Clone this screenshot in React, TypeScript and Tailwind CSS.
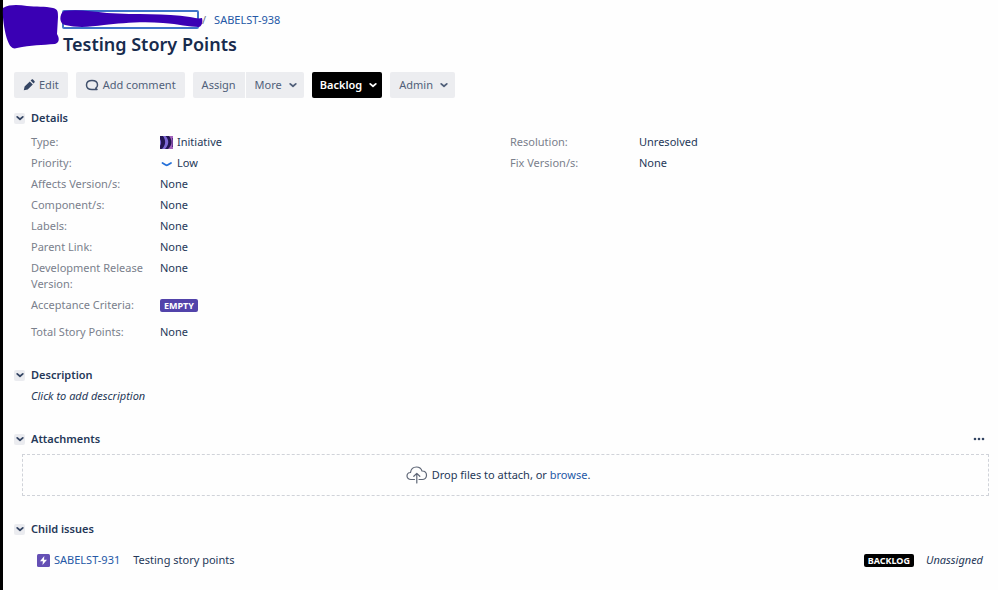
import type { ReactNode } from "react";

function Caret() {
  return (
    <svg viewBox="0 0 10 10" className="size-[10px] shrink-0" fill="none" stroke="currentColor" strokeWidth="1.8" strokeLinecap="round" strokeLinejoin="round" aria-hidden="true">
      <path d="M2.2 3.9 5 6.2l2.8-2.3" />
    </svg>
  );
}

function ToolButton({ children, className = "" }: { children: ReactNode; className?: string }) {
  return (
    <button type="button" className={`flex h-[26px] items-center bg-[#ecedf0] text-[#505f79] ${className}`}>
      {children}
    </button>
  );
}

function SectionHeading({ title, children }: { title: string; children?: ReactNode }) {
  return (
    <div className="flex h-4 items-center">
      <button type="button" aria-label={`Toggle ${title}`} className="mr-[6px] flex size-[11px] items-center justify-center rounded-xs bg-[#ebecf0] text-[#344563]">
        <Caret />
      </button>
      <h2 className="font-semibold">{title}</h2>
      {children}
    </div>
  );
}

function Field({ label, children }: { label: string; children: ReactNode }) {
  return (
    <div className="flex">
      <dt className="w-[129px] shrink-0 pr-3 text-[#7a808c]">{label}</dt>
      <dd className="flex h-4 items-center">{children}</dd>
    </div>
  );
}

function InitiativeIcon() {
  return (
    <svg viewBox="0 0 13 13" className="mr-1 size-[13px]" aria-hidden="true">
      <path fill="#a565bd" d="M0 0h13v13H0z" />
      <path fill="#241653" d="M0 0h9c3.500 4 3.500 9-1 13H0z" />
      <path fill="#7f6ad6" d="M0 3c1.500 2 1.500 5 0 7zM3 0h2.500c4 4 3.500 9-.5 13H2C6 9 6 4 3 0z" />
      <path fill="#4a2787" d="M12 2h1v9h-1c.7-3 .7-6 0-9z" />
    </svg>
  );
}

export default function App() {
  return (
    <main className="min-h-screen border-l-3 border-black bg-[#fefefe] pr-[9px] pb-5 font-['Noto_Sans','Open_Sans',sans-serif] text-[11px] leading-4 text-[#253858]">
      <header className="flex h-[57px] pt-[5px]">
        <svg viewBox="0 0 58 44" className="-ml-px h-[44px] w-[58px] shrink-0" aria-hidden="true">
          <path fill="#3a00b4" d="M1 3C8-1 17 0 25 1c9 1 18 0 26 2 5 1 5 4 5 9l-1 17c3 5 2 9-2 10-13 1-24 1-38 4-5 2-8-3-10-9C3 28 0 13 1 3z" />
        </svg>
        <div>
          <nav aria-label="Breadcrumb" className="ml-[2px] flex items-center pt-[5px] text-[#2458a6]">
            <a href="#project" aria-label="Project" className="relative block h-[19px] w-[137px] rounded-xs border-2 border-[#3f74c8]">
              <svg viewBox="0 0 144 18" className="absolute -top-[2px] -left-[4px] h-[18px] w-[144px] max-w-none" aria-hidden="true">
                <path fill="#3a00b4" d="M4 1c12-2 27 0 43 2 30 2 58 0 83 4 6 1 8 2 12 1 1 4 0 8-3 9-10 0-20-3-36-4-20-2-42 0-59 2-14 2-27 3-39 0C-1 14-1 4 4 1z" />
              </svg>
            </a>
            <span className="ml-[3px] text-[#6b778c]">/</span>
            <a href="#SABELST-938" className="ml-2">SABELST-938</a>
          </nav>
          <h1 className="ml-[3px] text-[18px] leading-[30px] font-semibold text-[#172b4d]">Testing Story Points</h1>
        </div>
      </header>

      <div className="mt-[15px] ml-[11px] flex gap-2" role="toolbar" aria-label="Issue actions">
        <ToolButton className="rounded-xs px-[9px]">
          <svg viewBox="0 0 12 12" className="mr-1 size-[12px]" fill="#344563" aria-hidden="true">
            <path d="m.8 11.300.8-3.800L6.800 2.400l3 3-5.100 5.100zM7.600 1.600l.9-.9c.5-.5 1.200-.5 1.700 0l1.200 1.200c.5.500.5 1.200 0 1.700l-.9.900z" />
          </svg>
          Edit
        </ToolButton>
        <ToolButton className="rounded-xs px-[9px]">
          <svg viewBox="0 0 14 14" className="mr-1 size-[14px]" fill="none" stroke="#42526e" strokeWidth="1.5" strokeLinejoin="round" aria-hidden="true">
            <path d="M10.8 10.2C12 9.400 12.500 8.300 12.500 7c0-2.800-2.300-4.500-5.500-4.500S1.500 4.300 1.500 7s2.300 4.500 5.500 4.500h5z" />
          </svg>
          Add comment
        </ToolButton>
        <div className="flex gap-px">
          <ToolButton className="rounded-l-xs px-[9px]">Assign</ToolButton>
          <ToolButton className="gap-[6px] rounded-r-xs pr-[6px] pl-[9px]">More <Caret /></ToolButton>
        </div>
        <button type="button" className="flex h-[26px] items-center gap-[6px] rounded-xs bg-black pr-1 pl-2 font-semibold text-white">
          Backlog <Caret />
        </button>
        <ToolButton className="gap-[6px] rounded-xs pr-[6px] pl-[9px]">Admin <Caret /></ToolButton>
      </div>

      <section className="mt-3 ml-[11px]">
        <SectionHeading title="Details" />
        <div className="mt-2 ml-[17px] grid grid-cols-2">
          <dl className="flex flex-col gap-[5px]">
            <Field label="Type:"><InitiativeIcon />Initiative</Field>
            <Field label="Priority:">
              <svg viewBox="0 0 13 13" className="mr-1 size-[13px]" fill="none" stroke="#2671d9" strokeWidth="1.8" strokeLinecap="round" strokeLinejoin="round" aria-hidden="true">
                <path d="M2.500 6 5.800 8q.9.500 1.800 0L11 6" />
              </svg>
              Low
            </Field>
            <Field label="Affects Version/s:">None</Field>
            <Field label="Component/s:">None</Field>
            <Field label="Labels:">None</Field>
            <Field label="Parent Link:">None</Field>
            <Field label="Development Release Version:">None</Field>
            <Field label="Acceptance Criteria:">
              <span className="rounded-xs bg-[#5243aa] px-1 text-[9px] leading-[13px] font-bold text-white">EMPTY</span>
            </Field>
            <div className="mt-[6px]"><Field label="Total Story Points:">None</Field></div>
          </dl>
          <dl className="flex flex-col gap-[5px]">
            <Field label="Resolution:">Unresolved</Field>
            <Field label="Fix Version/s:">None</Field>
          </dl>
        </div>
      </section>

      <section className="mt-[27px] ml-[11px]">
        <SectionHeading title="Description" />
        <p className="mt-[5px] ml-[17px] italic">Click to add description</p>
      </section>

      <section className="mt-[27px] ml-[11px]">
        <SectionHeading title="Attachments">
          <button type="button" aria-label="Attachment options" className="mr-1 ml-auto">
            <svg viewBox="0 0 12 4" className="h-1 w-3" fill="#344563" aria-hidden="true">
              <circle cx="2" cy="2" r="1.300" /><circle cx="6" cy="2" r="1.300" /><circle cx="10" cy="2" r="1.300" />
            </svg>
          </button>
        </SectionHeading>
        <div className="mt-[7px] ml-2 flex h-[42px] items-center justify-center border border-dashed border-[#d0d3d9] pr-[15px]">
          <svg viewBox="0 0 22 18" className="mr-1 h-[18px] w-[22px]" fill="none" stroke="#5e6676" strokeWidth="1.200" strokeLinecap="round" strokeLinejoin="round" aria-hidden="true">
            <path d="M8.500 13.500H5C2.700 13.500 1 12 1 10s1.500-3.400 3.500-3.500C5 3 7.500 1 10.500 1c2.600 0 4.700 1.500 5.500 4 2.700 0 4.500 1.800 4.500 4.200s-1.800 4.300-4.300 4.300H13M10.800 17V7.500M7.800 10.300l3-2.900 3 2.900" />
          </svg>
          <p>Drop files to attach, or <a href="#browse" className="text-[#2458a6]">browse</a>.</p>
        </div>
      </section>

      <section className="mt-[25px] ml-[11px]">
        <SectionHeading title="Child issues" />
        <div className="mt-[15px] mr-[6px] ml-[23px] flex h-4 items-center">
          <svg viewBox="0 0 13 13" className="mr-1 size-[13px]" aria-hidden="true">
            <rect width="13" height="13" rx="1.500" fill="#6550b5" />
            <path fill="#fff" d="M7.300 2 3 7.300h2.900L5.500 11 10 5.800H7z" />
          </svg>
          <a href="#SABELST-931" className="text-[#2458a6]">SABELST-931</a>
          <span className="ml-[13px]">Testing story points</span>
          <span className="mr-3 ml-auto rounded-xs bg-black px-1 text-[9px] leading-[13px] font-bold text-white">BACKLOG</span>
          <em>Unassigned</em>
        </div>
      </section>
    </main>
  );
}
